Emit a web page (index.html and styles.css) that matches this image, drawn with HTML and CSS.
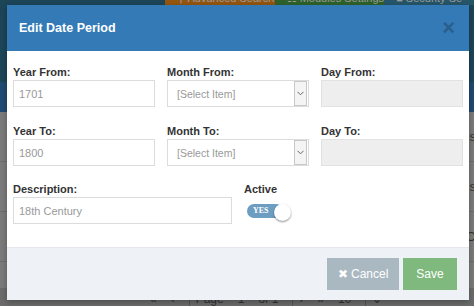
FILE: index.html
```html
<!DOCTYPE html>
<html lang="en">
<head>
    <meta charset="UTF-8">
    <title>Edit Date Period</title>
    <link rel="stylesheet" href="styles.css">
</head>
<body>
<div class="page">
    <div class="topbar">
        <div class="top-btn orange"><span>&#9906; Advanced Search</span></div>
        <div class="top-btn green"><span>&#9783; Modules Settings</span></div>
        <div class="top-btn teal"><span>&#9632; Security Se</span></div>
    </div>
    <div class="grid-head"></div>
    <div class="grid-row"><span>s</span></div>
    <div class="grid-row"><span>s</span></div>
    <div class="grid-row"><span>O</span></div>
    <div class="pager">
        <span>&laquo;</span><span>&lsaquo;</span><span class="sep">Page</span><span>1</span><span>of 1</span><span class="sep">&rsaquo;</span><span>&raquo;</span><span>10</span><span class="sep">&#8964;</span>
    </div>
</div>

<div class="modal">
    <div class="modal-header">
        <h4>Edit Date Period</h4>
        <span class="close">&times;</span>
    </div>
    <div class="modal-body">
        <div class="form-grid three">
            <div class="field">
                <label>Year From:</label>
                <input type="text" class="form-control" value="1701">
            </div>
            <div class="field">
                <label>Month From:</label>
                <div class="select">
                    <span>[Select Item]</span>
                    <span class="select-arrow"><svg width="7" height="5" viewBox="0 0 7 5"><path d="M0.5 0.8 L3.5 3.8 L6.5 0.8" fill="none" stroke="#666" stroke-width="1"/></svg></span>
                </div>
            </div>
            <div class="field">
                <label>Day From:</label>
                <input type="text" class="form-control disabled" disabled>
            </div>
            <div class="field">
                <label>Year To:</label>
                <input type="text" class="form-control" value="1800">
            </div>
            <div class="field">
                <label>Month To:</label>
                <div class="select">
                    <span>[Select Item]</span>
                    <span class="select-arrow"><svg width="7" height="5" viewBox="0 0 7 5"><path d="M0.5 0.8 L3.5 3.8 L6.5 0.8" fill="none" stroke="#666" stroke-width="1"/></svg></span>
                </div>
            </div>
            <div class="field">
                <label>Day To:</label>
                <input type="text" class="form-control disabled" disabled>
            </div>
        </div>
        <div class="form-grid two">
            <div class="field">
                <label>Description:</label>
                <input type="text" class="form-control" value="18th Century">
            </div>
            <div class="field">
                <label class="active-label">Active</label>
                <div class="switch">
                    <span class="switch-text">YES</span>
                    <span class="knob"></span>
                </div>
            </div>
        </div>
    </div>
    <div class="modal-footer">
        <button class="btn btn-cancel">&#10006; Cancel</button>
        <button class="btn btn-save">Save</button>
    </div>
</div>
</body>
</html>
```

FILE: styles.css
```css
body {
    margin: 0;
    font-family: 'Liberation Sans', Arial, sans-serif;
    background: #7b7b7b;
    width: 474px;
    height: 306px;
    overflow: hidden;
}

/* page behind the backdrop */
.page {
    height: 306px;
    display: flex;
    flex-direction: column;
}

.topbar {
    height: 82px;
    background: #1d4558;
    display: flex;
    padding-left: 165px;
    align-items: flex-start;
}

.top-btn {
    height: 5px;
    overflow: hidden;
    color: #9a9a9a;
    font-size: 11px;
    padding: 0 12px;
    white-space: nowrap;
    width: 91px;
}

.top-btn span {
    display: block;
    line-height: 14px;
    margin-top: -9px;
}

.top-btn.orange { background: #95560f; }
.top-btn.green { background: #2e6229; }
.top-btn.teal { background: #26566a; width: 70px; }

.grid-head {
    height: 30px;
    background: #1f4a72;
}

.grid-row {
    height: 49px;
    border-bottom: 1px solid #6e6e6e;
    display: flex;
    justify-content: flex-end;
    align-items: center;
    color: #333;
    font-size: 13px;
}

.grid-row span {
    margin-right: -2px;
}

.pager {
    margin-top: auto;
    height: 14px;
    background: #6c6c6c;
    display: flex;
    gap: 14px;
    padding-left: 150px;
    padding-top: 4px;
    font-size: 12px;
    color: #333;
}

.pager .sep {
    border-left: 1px solid #555;
    padding-left: 6px;
}

/* modal */
.modal {
    position: absolute;
    top: 5px;
    left: 7px;
    width: 462px;
    background: #fff;
    box-shadow: 0 2px 6px rgba(0, 0, 0, 0.3);
}

.modal-header {
    height: 46px;
    background: #337ab7;
    display: flex;
    align-items: center;
    justify-content: space-between;
    padding: 0 12px;
}

.modal-header h4 {
    margin: 0;
    color: #fff;
    font-size: 12.5px;
    font-weight: bold;
}

.close {
    color: #2b5e8c;
    font-size: 22px;
    font-weight: bold;
    line-height: 1;
    margin-right: 2px;
}

.modal-body {
    padding: 14px 6px 23px;
}

.form-grid {
    display: grid;
    column-gap: 12px;
    row-gap: 17px;
}

.form-grid.three {
    grid-template-columns: repeat(3, 1fr);
}

.form-grid.two {
    grid-template-columns: repeat(2, 1fr);
    margin-top: 16px;
}

.field label {
    display: block;
    font-size: 11px;
    font-weight: bold;
    color: #333;
    line-height: 15px;
}

.form-control,
.select {
    box-sizing: border-box;
    width: 100%;
    height: 27px;
    border: 1px solid #dcdcdc;
    background: #fff;
    font-family: inherit;
    font-size: 11px;
    color: #999;
    padding: 0 5px;
    margin: 0;
    outline: none;
}

.form-control.disabled {
    background: #eeeeee;
    border-color: #e2e2e2;
}

.select {
    display: flex;
    align-items: center;
    justify-content: space-between;
    padding: 0 0 0 9px;
    font-size: 10.5px;
}

.select-arrow {
    width: 11px;
    height: 23px;
    margin-right: 1px;
    border: 1px solid #c8c8c8;
    background: #f4f4f4;
    display: flex;
    align-items: center;
    justify-content: center;
}

.switch {
    position: relative;
    width: 44px;
    height: 17px;
    margin-top: 7px;
    margin-left: 3px;
}

.switch-text {
    display: block;
    width: 36px;
    height: 14px;
    margin-top: 2px;
    border-radius: 7px;
    background: #6e9dc2;
    color: #fff;
    font-family: 'Liberation Serif', serif;
    font-size: 8px;
    font-weight: bold;
    line-height: 14px;
    padding-left: 6px;
    box-sizing: border-box;
}

.knob {
    position: absolute;
    top: 0;
    right: 0;
    width: 17px;
    height: 17px;
    border-radius: 50%;
    background: #fff;
    box-shadow: 0 1px 2px rgba(0, 0, 0, 0.45);
}

.modal-footer {
    background: #eef1f6;
    border-top: 1px solid #e4e8ee;
    display: flex;
    justify-content: flex-end;
    gap: 4px;
    padding: 10px 12px 10px;
}

.btn {
    height: 32px;
    border: none;
    color: #fff;
    font-family: inherit;
    font-size: 12px;
    padding: 0;
}

.btn-cancel {
    width: 72px;
    background: #aab8c2;
}

.btn-save {
    width: 54px;
    background: #80b97e;
}
```
